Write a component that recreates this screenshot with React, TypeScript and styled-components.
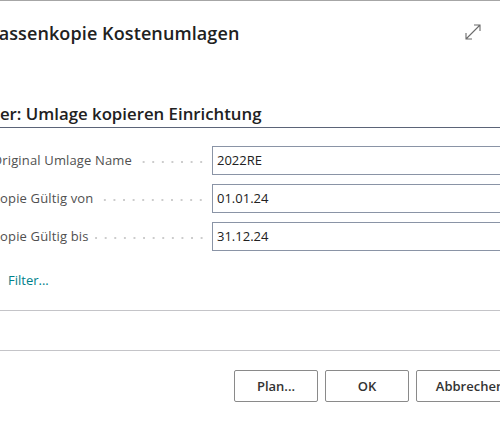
import React from "react";
import styled, { createGlobalStyle } from "styled-components";

const GlobalStyle = createGlobalStyle`
  html, body {
    margin: 0;
    padding: 0;
    background: #ffffff;
    overflow: hidden;
  }
  body {
    font-family: "Open Sans", "Noto Sans", sans-serif;
    color: #212121;
  }
`;

const Viewport = styled.div`
  width: 500px;
  height: 423px;
  overflow: hidden;
  border-top: 1px solid #a6a6a6;
  box-sizing: border-box;
`;

const Dialog = styled.div`
  width: 600px;
  margin-left: -22px;
  display: flex;
  flex-direction: column;
`;

const Header = styled.div`
  height: 88px;
  display: flex;
  align-items: flex-start;
  justify-content: space-between;
  padding: 19px 0 0 4px;
  box-sizing: border-box;
`;

const Title = styled.h1`
  margin: 0;
  font-size: 18px;
  line-height: 26px;
  font-weight: 600;
  letter-spacing: 0.1px;
  color: #212121;
  white-space: nowrap;
`;

const ExpandButton = styled.span`
  display: block;
  width: 18px;
  height: 18px;
  margin: 3px 96px 0 0;
  color: #6b6b6b;
`;

const SectionTitle = styled.div`
  padding: 13px 0 1px;
  font-size: 16.8px;
  line-height: 24px;
  font-weight: 600;
  text-indent: -3px;
  white-space: nowrap;
  color: #212121;
  border-bottom: 1px solid #5b6478;
`;

const Form = styled.div`
  display: flex;
  flex-direction: column;
  gap: 9px;
  margin-top: 18px;
`;

const Row = styled.div`
  display: flex;
  align-items: center;
  height: 29px;
`;

const LabelCell = styled.div`
  width: 234px;
  flex: none;
  display: flex;
  align-items: center;
  padding-left: 14px;
  box-sizing: border-box;
`;

const Label = styled.span`
  font-size: 13px;
  letter-spacing: 0.15px;
  line-height: 18px;
  margin-top: -1px;
  color: #505050;
  white-space: nowrap;
  padding-right: 6px;
`;

const Leader = styled.span`
  flex: 1;
  height: 2px;
  margin: 3px 6px 0 0;
  background-image: radial-gradient(circle, #cccccc 0.9px, transparent 1.1px);
  background-size: 9.6px 2px;
  background-repeat: repeat-x;
  background-position: right center;
`;

const Input = styled.div`
  width: 340px;
  height: 29px;
  box-sizing: border-box;
  border: 1px solid #8a94a6;
  padding-left: 4px;
  font-size: 13px;
  line-height: 27px;
  color: #212121;
`;

const FilterLink = styled.a`
  display: block;
  margin: 20px 0 0 30px;
  padding-bottom: 1px;
  font-size: 13px;
  line-height: 18px;
  color: #00808a;
  text-decoration: none;
`;

const Divider = styled.div<{ $top: number }>`
  margin-top: ${(p) => p.$top}px;
  height: 1px;
  background: #c4c4c8;
`;

const Footer = styled.div`
  display: flex;
  gap: 7px;
  margin: 19px 0 0 256px;
`;

const Button = styled.button<{ $wide?: boolean }>`
  width: ${(p) => (p.$wide ? 108 : 84)}px;
  height: 32px;
  flex: none;
  background: #ffffff;
  border: 1px solid #8a8a8a;
  border-radius: 2px;
  font-family: inherit;
  font-size: 13px;
  font-weight: 600;
  color: #333333;
  padding: 0;
`;

const fields = [
  { label: "Original Umlage Name", value: "2022RE" },
  { label: "Kopie Gültig von", value: "01.01.24" },
  { label: "Kopie Gültig bis", value: "31.12.24" },
];

export default function App() {
  return (
    <>
      <GlobalStyle />
      <Viewport>
        <Dialog>
          <Header>
            <Title>Massenkopie Kostenumlagen</Title>
            <ExpandButton>
              <svg width="18" height="18" viewBox="0 0 18 18" fill="none" stroke="currentColor" strokeWidth="1.1">
                <path d="M2 16 L16 2 M10 2 H16 V8 M2 10 V16 H8" />
              </svg>
            </ExpandButton>
          </Header>
          <SectionTitle>Filter: Umlage kopieren Einrichtung</SectionTitle>
          <Form>
            {fields.map((f) => (
              <Row key={f.label}>
                <LabelCell>
                  <Label>{f.label}</Label>
                  <Leader />
                </LabelCell>
                <Input>{f.value}</Input>
              </Row>
            ))}
          </Form>
          <FilterLink>Filter...</FilterLink>
          <Divider $top={20} />
          <Divider $top={39} />
          <Footer>
            <Button>Plan...</Button>
            <Button>OK</Button>
            <Button $wide>Abbrechen</Button>
          </Footer>
        </Dialog>
      </Viewport>
    </>
  );
}
